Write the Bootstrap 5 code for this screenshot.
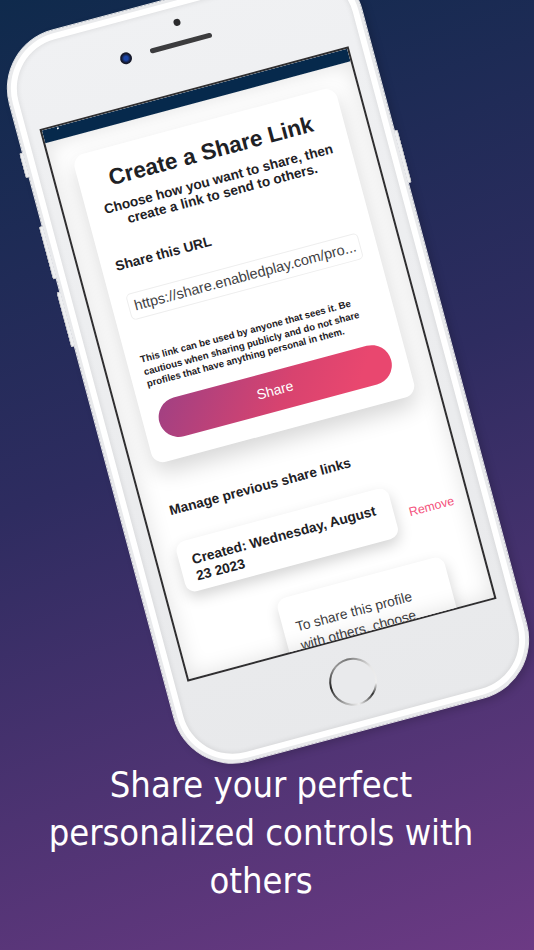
<!DOCTYPE html>
<html lang="en">
<head>
<meta charset="utf-8">
<title>Share your perfect personalized controls</title>
<link rel="stylesheet" href="https://cdn.jsdelivr.net/npm/bootstrap@5.3.0/dist/css/bootstrap.min.css">
<style>
html,body{height:100%}
body{width:534px;height:950px;overflow:hidden;background:linear-gradient(160deg,#0f2a4c 0%,#2e2c60 45%,#6c3a84 100%);font-family:"Liberation Sans",Arial,sans-serif}
.stage{height:751px;flex:none}
.handset{width:364px;height:756px;flex:none;margin-top:-14px;margin-left:2px;transform:rotate(-15deg);border-radius:60px;background:linear-gradient(180deg,#f0f1f3,#e8e9eb);box-shadow:0 0 0 1px #e8e9eb,inset 0 0 0 3px #e9eaec,inset 0 0 0 9px #fff,inset 0 0 5px 10px rgba(0,0,0,.08),3px 4px 8px rgba(0,0,0,.18);position:relative}
.sidekey{position:absolute;width:4px;background:#eeeff1;border:1px solid #c4c5c9;border-right:0;border-radius:2px 0 0 2px}
.k1{left:-4px;top:110px;height:26px}.k2{left:-4px;top:186px;height:55px}.k3{left:-4px;top:254px;height:57px}
.k4{right:-4px;top:185px;height:55px;transform:scaleX(-1)}
.topzone{height:92px;position:relative;flex:none}
.sensor{position:absolute;width:7px;height:7px;background:#2b2b2d;border-radius:50%;left:179px;top:21px}
.speaker{position:absolute;width:64px;height:5px;background:#3c3c3e;border-radius:3px;left:149px;top:43px}
.lens{position:absolute;width:12px;height:12px;border-radius:50%;background:radial-gradient(circle,#1c46a8 0 22%,#14182c 55%,#2b2b2d);left:118px;top:40px}
.display{width:320px;height:572px;flex:none;margin:0 auto;border:2px solid #2f2e30;background:#fff;overflow:hidden;position:relative}
.display::after{content:"";position:absolute;inset:13px 0 0;box-shadow:inset 0 0 22px rgba(0,0,0,.12);pointer-events:none}
.statusbar{height:13px;background:#06294c;flex:none;padding:1px 0 0 15px}
.statusdot{display:block;width:2px;height:2px;background:#fff;border-radius:50%}
.sheet{padding:20px 22px 0}
.sharecard{border:0;border-radius:12px;height:319px;box-shadow:0 10px 22px rgba(0,0,0,.16);color:#1e2125}
.sharebody{padding:17px 16px 0}
.ttl{font-size:22.6px;line-height:28px;font-weight:700;margin:0;text-align:center}
.sub{font-size:13.6px;line-height:15px;font-weight:700;text-align:center;margin:7px -6px 0}
.lbl{font-size:13.8px;font-weight:700;line-height:18px;margin:27px 0 20px -2px}
.urlfield{font-size:14.5px;line-height:20px;padding:2px 3px 2px 5px;height:27px;color:#3f3f44;border:1px solid #eee;border-radius:5px;white-space:nowrap;overflow:hidden}
.note{font-size:9.6px;line-height:12.5px;font-weight:700;margin:34px 4px 0 -2px}
.sharebtn{display:block;width:240px;height:40px;margin:13px auto 0;border:0;border-radius:20px;background:linear-gradient(125deg,#a04083,#d8436f 55%,#e9476f 85%);color:#fff;font-size:14px;padding:0}
.mng{font-size:13.7px;font-weight:700;line-height:18px;color:#1e2125;margin:40px 0 0 3px}
.row-item{margin:23px 0 0 -1px}
.linkcard{width:220px;height:52px;border:0;border-radius:10px;box-shadow:0 6px 14px rgba(0,0,0,.17);font-size:13.8px;line-height:17px;font-weight:700;padding:12px 6px 10px 13px;color:#1e2125;flex:none}
.rm{color:#f4517c;font-size:12.4px;margin:10px 0 0 15px}
.hint{width:173px;margin:29px 0 0 82px;border:0;border-radius:10px;box-shadow:0 6px 14px rgba(0,0,0,.17);padding:23px 30px 17px 13px;font-size:13.8px;line-height:18.5px;color:#3d3d41;height:120px}
.chin{flex:1;position:relative}
.homekey{position:absolute;left:158px;top:19px;width:48px;height:48px;border-radius:50%;background:conic-gradient(#777,#e8e8e8 18%,#eee 30%,#333 38%,#eee 50%,#aaa 60%,#222 75%,#999 90%,#777)}
.homekey::after{content:"";position:absolute;inset:2px;border-radius:50%;background:#e9eaec}
.caption{color:#fff;font-family:"DejaVu Sans",sans-serif;font-stretch:condensed;font-size:36px;line-height:48px;text-align:center;margin:0;padding:10px 37px 0 25px}
</style>
</head>
<body class="d-flex flex-column">
<div class="stage d-flex justify-content-center">
  <div class="handset d-flex flex-column">
    <i class="sidekey k1"></i><i class="sidekey k2"></i><i class="sidekey k3"></i><i class="sidekey k4"></i>
    <div class="topzone"><i class="sensor"></i><i class="speaker"></i><i class="lens"></i></div>
    <div class="display">
      <div class="statusbar"><i class="statusdot"></i></div>
      <div class="sheet">
        <div class="card sharecard">
          <div class="sharebody">
            <h1 class="ttl">Create a Share Link</h1>
            <p class="sub">Choose how you want to share, then create a link to send to others.</p>
            <div class="lbl">Share this URL</div>
            <div class="form-control urlfield">https://share.enabledplay.com/pro...</div>
            <p class="note">This link can be used by anyone that sees it. Be cautious when sharing publicly and do not share profiles that have anything personal in them.</p>
            <button class="btn sharebtn" type="button">Share</button>
          </div>
        </div>
        <div class="mng">Manage previous share links</div>
        <div class="row-item d-flex align-items-center">
          <div class="card linkcard">Created: Wednesday, August 23 2023</div>
          <span class="rm">Remove</span>
        </div>
        <div class="card hint">To share this profile with others, choose</div>
      </div>
    </div>
    <div class="chin"><div class="homekey"></div></div>
  </div>
</div>
<p class="caption">Share your perfect personalized controls with others</p>
<script src="https://cdn.jsdelivr.net/npm/bootstrap@5.3.0/dist/js/bootstrap.bundle.min.js"></script>
</body>
</html>
